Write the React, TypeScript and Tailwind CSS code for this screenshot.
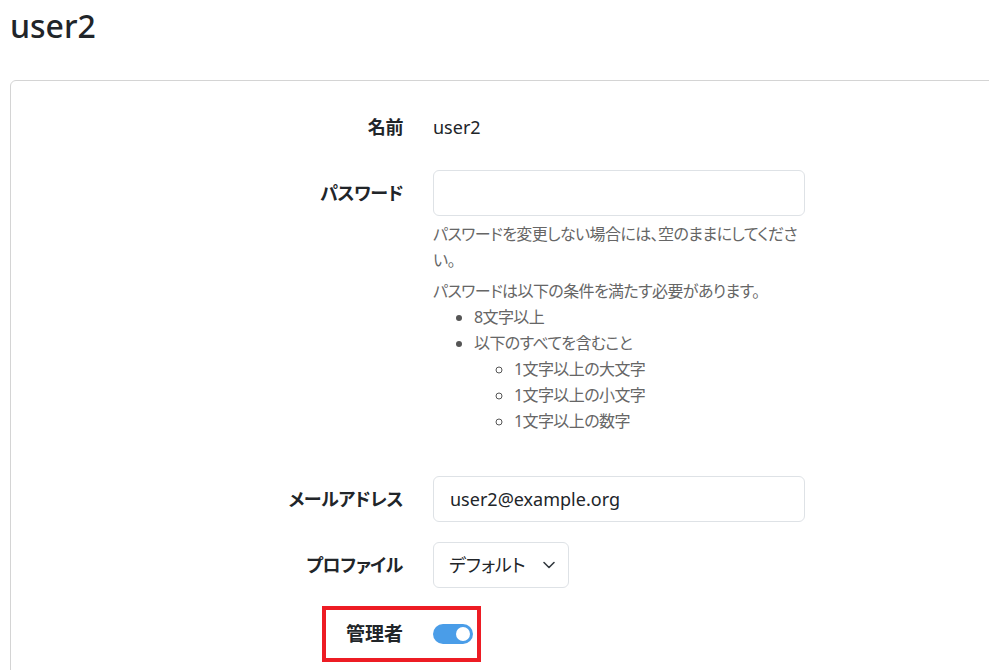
const jp = "font-['Noto_Sans','Noto_Sans_CJK_JP',sans-serif] [font-feature-settings:'palt']";

function Field({ label, children, className = '' }: { label: string; children: React.ReactNode; className?: string }) {
  return (
    <div className={`grid grid-cols-[392px_372px] gap-x-[30px] ${className}`}>
      <div className="flex h-[46px] items-center justify-end text-[18px] font-bold tracking-[-0.4px] text-[#212529]">{label}</div>
      <div>{children}</div>
    </div>
  );
}

export default function App() {
  return (
    <div className={`h-[670px] w-full overflow-hidden bg-white ${jp}`}>
      <div className="pl-[10px]">
        <h1 className="pt-[4px] text-[32px] font-medium leading-[44px] text-[#212529]">user2</h1>
        <div className="mt-[32px] w-[1100px] rounded-md border border-[#d4d4d4] pt-[23px] pb-[40px]">
          <div className="flex flex-col gap-[20px]">
            <Field label="名前">
              <div className="flex h-[46px] items-center text-[18px] text-[#212529]">user2</div>
            </Field>

            <Field label="パスワード" className="mb-[22px]">
              <input
                type="password"
                className="block h-[46px] w-full rounded-md border border-[#dee2e6] bg-white px-4 outline-none"
              />
              <div className="mt-[5px] text-[16px] leading-[26px] tracking-[-0.6px] text-[#666]">
                <p>パスワードを変更しない場合には、空のままにしてください。</p>
                <p className="mt-[5px]">パスワードは以下の条件を満たす必要があります。</p>
                <ul className="list-disc pl-[41px] marker:text-[#555]">
                  <li>8文字以上</li>
                  <li>
                    以下のすべてを含むこと
                    <ul className="list-[circle] pl-[40px]">
                      <li>1文字以上の大文字</li>
                      <li>1文字以上の小文字</li>
                      <li>1文字以上の数字</li>
                    </ul>
                  </li>
                </ul>
              </div>
            </Field>

            <Field label="メールアドレス">
              <input
                type="text"
                defaultValue="user2@example.org"
                className="block h-[46px] w-full rounded-md border border-[#dee2e6] bg-white px-4 text-[18px] text-[#212529] outline-none"
              />
            </Field>

            <Field label="プロファイル">
              <button className="flex h-[46px] w-[136px] items-center gap-[15px] rounded-md border border-[#dee2e6] bg-white pl-[15px] text-[18px] text-[#212529]">
                デフォルト
                <svg width="16" height="16" viewBox="0 0 16 16" fill="none" stroke="#343a40" strokeWidth="1.6" strokeLinecap="round" strokeLinejoin="round">
                  <path d="M3 5.5l5 5 5-5" />
                </svg>
              </button>
            </Field>

            <div className="-mt-[2px] pl-[311px]">
              <div className="flex h-[56px] w-[159px] items-center border-[4px] border-[#ed1c24] pr-[4px]">
                <span className="w-[77px] text-right text-[19px] font-bold text-[#212529]">管理者</span>
                <span className="ml-[30px] flex h-[20px] w-[40px] items-center justify-end rounded-full bg-[#4a9de8] pr-[3px]">
                  <span className="h-[14px] w-[14px] rounded-full bg-white" />
                </span>
              </div>
            </div>
          </div>
        </div>
      </div>
    </div>
  );
}
